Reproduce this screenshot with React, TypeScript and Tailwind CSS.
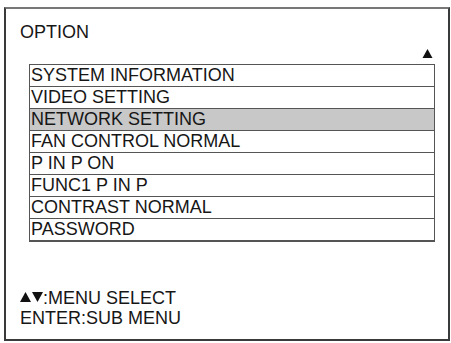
const items = [
  "SYSTEM INFORMATION",
  "VIDEO SETTING",
  "NETWORK SETTING",
  "FAN CONTROL NORMAL",
  "P IN P ON",
  "FUNC1 P IN P",
  "CONTRAST NORMAL",
  "PASSWORD",
];

const Up = ({ className = "" }: { className?: string }) => (
  <svg viewBox="0 0 10 9" className={className}>
    <polygon points="5,0 10,9 0,9" fill="#111" />
  </svg>
);

const Down = ({ className = "" }: { className?: string }) => (
  <svg viewBox="0 0 10 9" className={className}>
    <polygon points="0,0 10,0 5,9" fill="#111" />
  </svg>
);

export default function App() {
  return (
    <div className="w-[451px] h-[343px] bg-white pt-[7px] pl-[4px] font-['Liberation_Sans',Arial,sans-serif] text-[#161616]">
      <div className="w-[446px] h-[334px] border-2 border-[#3a3a3a] border-t-[#777] flex flex-col">
        <div className="pt-[14px] pl-[14px] text-[18px] leading-[18px]">OPTION</div>
        <div className="flex justify-end pr-[15px] mt-[8px]">
          <Up className="w-[11px] h-[9px]" />
        </div>
        <div className="ml-[23px] w-[406px] mt-[6px] border border-b-2 border-[#555] flex flex-col">
          {items.map((item, i) => (
            <div
              key={item}
              className={`h-[21px] px-[1px] text-[18px] leading-[21px] whitespace-nowrap ${
                i > 0 ? "border-t border-[#555] h-[22px]" : ""
              } ${item === "NETWORK SETTING" ? "bg-[#c8c8c8]" : "bg-white"}`}
            >
              {item}
            </div>
          ))}
        </div>
        <div className="mt-[46px] pl-[14px] text-[18px] leading-[20px]">
          <div className="flex items-center">
            <Up className="w-[11px] h-[10px] mt-[-2px]" />
            <Down className="w-[11px] h-[10px] mt-[-2px] ml-[1px]" />
            <span>:MENU SELECT</span>
          </div>
          <div>ENTER:SUB MENU</div>
        </div>
      </div>
    </div>
  );
}
